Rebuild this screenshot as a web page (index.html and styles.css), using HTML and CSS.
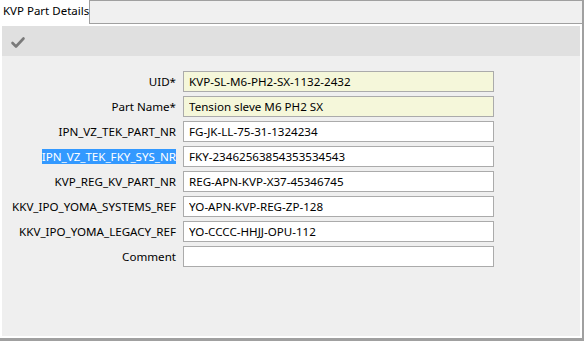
FILE: index.html
```html
<!DOCTYPE html>
<html>
<head>
<meta charset="utf-8">
<link rel="stylesheet" href="styles.css">
</head>
<body>
<div class="window">
  <div class="tabstrip">
    <div class="tab">KVP Part Details</div>
    <div class="tabfill"></div>
  </div>
  <div class="panel">
    <div class="panel-inner">
      <div class="toolbar">
        <svg class="check" width="16" height="14" viewBox="0 0 16 14">
          <path d="M2.5 8 L6 11.5 L13.5 3.5" fill="none" stroke="#7a7a7a" stroke-width="2.6" stroke-linecap="round" stroke-linejoin="round"/>
        </svg>
      </div>
      <div class="form">
        <label class="lbl">UID*</label>
        <input class="field req" value="KVP-SL-M6-PH2-SX-1132-2432">
        <label class="lbl">Part Name*</label>
        <input class="field req" value="Tension sleve M6 PH2 SX">
        <label class="lbl">IPN_VZ_TEK_PART_NR</label>
        <input class="field" value="FG-JK-LL-75-31-1324234">
        <label class="lbl"><span class="sel">IPN_VZ_TEK_FKY_SYS_NR</span></label>
        <input class="field" value="FKY-23462563854353534543">
        <label class="lbl">KVP_REG_KV_PART_NR</label>
        <input class="field" value="REG-APN-KVP-X37-45346745">
        <label class="lbl">KKV_IPO_YOMA_SYSTEMS_REF</label>
        <input class="field" value="YO-APN-KVP-REG-ZP-128">
        <label class="lbl">KKV_IPO_YOMA_LEGACY_REF</label>
        <input class="field" value="YO-CCCC-HHJJ-OPU-112">
        <label class="lbl">Comment</label>
        <input class="field" value="">
      </div>
    </div>
  </div>
</div>
</body>
</html>
```
FILE: styles.css
```css
* { box-sizing: border-box; }
html, body {
  margin: 0;
  padding: 0;
  width: 584px;
  height: 341px;
  overflow: hidden;
  background: #ffffff;
  font-family: "Noto Sans", "DejaVu Sans", sans-serif;
  font-size: 11.6px;
  color: #000;
}
.window {
  width: 584px;
  height: 341px;
  display: flex;
  flex-direction: column;
}
.tabstrip {
  display: flex;
  height: 24px;
  flex: none;
}
.tab {
  width: 90px;
  height: 24px;
  background: #ffffff;
  border-right: 1px solid #a0a0a0;
  padding: 3px 0 0 3px;
  font-size: 11.5px;
  line-height: 16px;
  white-space: nowrap;
}
.tabfill {
  flex: 1;
  background: #f0f0f0;
  border-top: 1px solid #a0a0a0;
  border-bottom: 1px solid #a0a0a0;
  border-right: 2px solid #a0a0a0;
}
.panel {
  flex: 1;
  border-right: 2px solid #a0a0a0;
  border-bottom: 3px solid #a0a0a0;
}
.panel-inner {
  height: 100%;
  border: 2px solid #ffffff;
  background: #efefef;
}
.toolbar {
  height: 30px;
  background: #e0e0e0;
  display: flex;
  align-items: center;
  padding-left: 8px;
}
.check { display: block; margin-top: 1px; }
.form {
  display: grid;
  grid-template-columns: 174px 311px;
  column-gap: 7px;
  row-gap: 4px;
  padding-top: 15px;
  align-items: center;
}
.lbl {
  text-align: right;
  white-space: nowrap;
  line-height: 14px;
}
.sel {
  background: #3399ff;
  color: #ffffff;
}
.field {
  height: 21px;
  width: 311px;
  border: 1px solid #ababab;
  background: #ffffff;
  font-family: inherit;
  font-size: 11.6px;
  color: #000;
  padding: 0 5px;
  margin: 0;
  outline: none;
}
.field.req { background: #f5f7da; }
```
